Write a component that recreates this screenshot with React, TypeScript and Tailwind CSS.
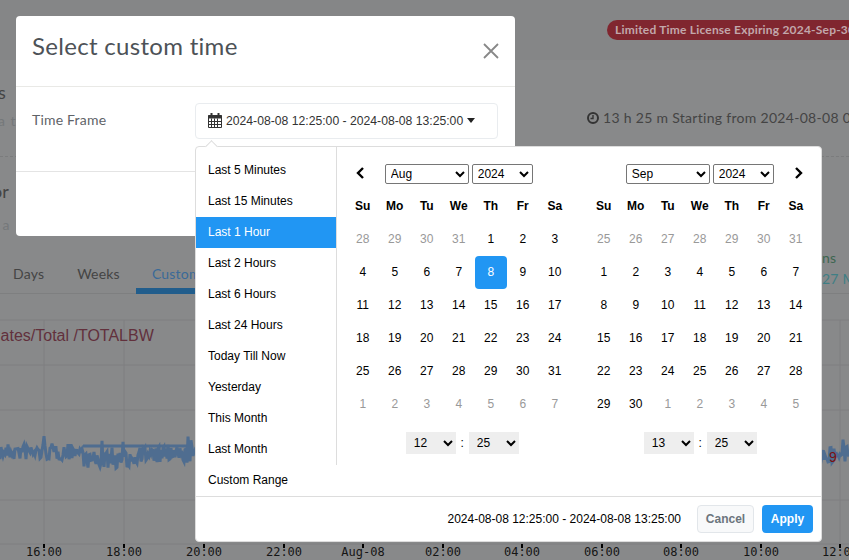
import React from "react"

const RANGES = [
    "Last 5 Minutes",
    "Last 15 Minutes",
    "Last 1 Hour",
    "Last 2 Hours",
    "Last 6 Hours",
    "Last 24 Hours",
    "Today Till Now",
    "Yesterday",
    "This Month",
    "Last Month",
    "Custom Range",
]
const DAY_NAMES = ["Su", "Mo", "Tu", "We", "Th", "Fr", "Sa"]
const MONTHS = ["Jul", "Aug", "Sep", "Oct"]
const YEARS = ["2023", "2024", "2025"]
const pad = (n: number) => String(n).padStart(2, "0")
const HOURS = Array.from({length: 24}, (_, i) => pad(i))
const MINUTES = Array.from({length: 60}, (_, i) => pad(i))

const AUG: [number, boolean][] = [
    ...[28, 29, 30, 31].map((d): [number, boolean] => [d, true]),
    ...Array.from({length: 31}, (_, i): [number, boolean] => [i + 1, false]),
    ...[1, 2, 3, 4, 5, 6, 7].map((d): [number, boolean] => [d, true]),
]
const SEP: [number, boolean][] = [
    ...[25, 26, 27, 28, 29, 30, 31].map((d): [number, boolean] => [d, true]),
    ...Array.from({length: 30}, (_, i): [number, boolean] => [i + 1, false]),
    ...[1, 2, 3, 4, 5].map((d): [number, boolean] => [d, true]),
]

// the bandwidth trace, noisy but repeatable
const wavePoints = () => {
    let seed = 7
    const rand = () => {
        seed = (seed * 16807) % 2147483647
        return seed / 2147483647
    }
    const pts: string[] = []
    for (let x = 0; x <= 849; x += 1) {
        const base = x > 83 && x < 135 ? 166 : x < 83 ? 158 : 161
        const spike = rand() > 0.95 ? -11 : 0
        pts.push(`${x},${(base + (rand() - 0.5) * 17 + spike).toFixed(1)}`)
    }
    return pts.join(" ")
}

const TICKS: [number, string][] = [
    [44, "16:00"], [124, "18:00"], [204, "20:00"], [284, "22:00"], [363, "Aug-08"], [443, "02:00"],
    [522, "04:00"], [602, "06:00"], [681, "08:00"], [761, "10:00"], [840, "12:00"],
]

const Chart = () => (
    <svg width="849" height="265" viewBox="0 0 849 265" className="block">
        {[26, 71, 116, 206, 250].map(y => <line key={y} x1="0" x2="849" y1={y} y2={y} stroke="#7e7f80"/>)}
        {TICKS.map(([x]) => <line key={x} x1={x} x2={x} y1="26" y2="250" stroke="#7e7f80"/>)}
        <line x1="83" x2="190" y1="152" y2="152" stroke="#4f6d90" strokeWidth="3"/>
        <polyline points={wavePoints()} fill="none" stroke="#4f6d90" strokeWidth="3"/>
        {TICKS.map(([x, label]) => (
            <g key={label}>
                <text x={x} y="262" textAnchor="middle" fontSize="12" fill="#151515"
                      fontFamily="'DejaVu Sans Mono', monospace">{label}</text>
                <line x1={x} x2={x} y1="250" y2="254" stroke="#000" strokeWidth="2"/>
            </g>
        ))}
    </svg>
)

const Chevron = ({dir}: {dir: "left" | "right"}) => (
    <svg width="10" height="12" viewBox="0 0 10 12" className="text-black">
        <path d={dir === "left" ? "M8 1 3 6l5 5" : "M2 1l5 5-5 5"} fill="none" stroke="currentColor" strokeWidth="2.4"/>
    </svg>
)

const NavSelect = ({value, options, width}: {value: string; options: string[]; width: string}) => (
    <select defaultValue={value}
            className={`${width} h-5 rounded-[2px] border border-[#767676] bg-white pl-[1px] text-xs text-black appearance-auto`}>
        {options.map(o => <option key={o}>{o}</option>)}
    </select>
)

const TimeSelect = ({value, options}: {value: string; options: string[]}) => (
    <select defaultValue={value} className="h-[22px] w-[50px] bg-[#eeeeee] pl-[4px] text-xs text-black appearance-auto">
        {options.map(o => <option key={o}>{o}</option>)}
    </select>
)

const Calendar = ({days, month, hour, prev, next, selected, minute, timeClass}: {
    days: [number, boolean][]
    month: string
    hour: string
    minute: string
    prev?: boolean
    next?: boolean
    selected?: number
    timeClass: string
}) => (
    <div className="w-56">
        <div className="grid h-[33px] grid-cols-[32px_160px_32px] items-center">
            <div className="flex justify-start pb-[2px] pl-[8px]">{prev && <Chevron dir="left"/>}</div>
            <div className="flex justify-center gap-[3px]">
                <NavSelect value={month} options={MONTHS} width="w-[84px]"/>
                <NavSelect value="2024" options={YEARS} width="w-[61px]"/>
            </div>
            <div className="flex justify-end pb-[2px] pr-[8px]">{next && <Chevron dir="right"/>}</div>
        </div>
        <div className="grid grid-cols-[repeat(7,32px)] auto-rows-[33px] text-xs">
            {DAY_NAMES.map(d => (
                <div key={d} className="flex items-center justify-center pb-[2px] font-bold text-black">{d}</div>
            ))}
            {days.map(([d, off], i) => (
                <div key={i} className={
                    selected === d && !off
                        ? "flex items-center justify-center rounded bg-[#2196f3] pb-[2px] text-white"
                        : off
                            ? "flex items-center justify-center pb-[2px] text-[#999999]"
                            : "flex items-center justify-center pb-[2px] text-black"
                }>{d}</div>
            ))}
        </div>
        <div className={`mt-[11px] flex h-[22px] items-center justify-center text-xs text-black ${timeClass}`}>
            <TimeSelect value={hour} options={HOURS}/>
            <span className="w-[13px] text-center">:</span>
            <TimeSelect value={minute} options={MINUTES}/>
        </div>
    </div>
)

export default function App() {
    return (
        <div className="relative h-[560px] w-[849px] overflow-hidden bg-[#88898a] font-['Lato',sans-serif] text-[#444444]">
            {/* page behind the dialog, already dimmed by the backdrop */}
            <div className="flex h-[60px] items-start overflow-hidden bg-[#858687] pl-[607px] pt-5">
                <span className="h-5 shrink-0 whitespace-nowrap rounded-l-[10px] bg-[#80262f] pl-2 text-xs font-bold leading-5 tracking-[0.2px] text-[#c2a7ab]">
                    Limited Time License Expiring 2024-Sep-30
                </span>
            </div>
            <div className="flex h-[97px] overflow-hidden border-b border-dashed border-[#7b7c7d] pt-5">
                <div className="-ml-[2px] w-[30px] shrink-0">
                    <div className="h-6 text-lg leading-6">s</div>
                    <div className="mt-[7px] text-sm tracking-[1px] text-[#75787a]">a ti</div>
                </div>
                <div className="ml-[559px] mt-[28px] flex h-5 shrink-0 items-center gap-[4px] whitespace-nowrap text-sm tracking-[0.3px]">
                    <svg width="12" height="12" viewBox="0 0 12 12" className="shrink-0">
                        <circle cx="6" cy="6" r="5" fill="none" stroke="#333" strokeWidth="2"/>
                        <path d="M6 3v3.5H3.5" fill="none" stroke="#333" strokeWidth="1.4"/>
                    </svg>
                    13 h 25 m Starting from 2024-08-08 00:00
                </div>
            </div>
            <div className="-ml-[8px] pt-[22px] text-lg leading-6">or</div>
            <div className="-ml-[6px] mt-[12px] text-sm leading-5 text-[#75787a]">t a</div>
            <div className="flex h-[59px] border-b border-[#7e7f80] pt-[29px] text-sm tracking-[0.2px]">
                <span className="ml-[13px]">Days</span>
                <span className="ml-[33px]">Weeks</span>
                <span className="ml-[16px] h-[30px] w-[59px] border-b-[6px] border-[#215d8c] pl-4 whitespace-nowrap text-[#3a6a98]">Custom</span>
                <div className="ml-auto -mt-[16px] mr-[-40px] w-[67px] shrink-0 text-sm leading-5">
                    <div className="text-[#3d6650]">ns</div>
                    <div className="mt-[1px] whitespace-nowrap text-[#3f7f85]">27 M</div>
                </div>
            </div>
            <div className="relative">
                <div className="absolute -left-[11px] top-[30px] font-['Liberation_Sans',sans-serif] text-base whitespace-nowrap text-[#62303c]">
                    Rates/Total /TOTALBW
                </div>
                <div className="absolute left-[829px] top-[153px] font-['Liberation_Sans',sans-serif] text-sm text-[#7a1010]">9</div>
                <Chart/>
            </div>

            {/* dialog */}
            <div className="absolute left-4 top-4 h-[220px] w-[499px] rounded bg-white">
                <div className="relative h-[71px] border-b border-[#e9e9e6] pl-4 pt-[14px]">
                    <div className="text-2xl leading-8 tracking-[0.3px] text-[#4d5257]">Select custom time</div>
                    <svg width="16" height="16" viewBox="0 0 16 16" className="absolute right-4 top-[27px] text-[#888888]">
                        <path d="M1 1l14 14M15 1 1 15" stroke="currentColor" strokeWidth="1.8"/>
                    </svg>
                </div>
                <div className="flex h-[85px] border-b border-[#e4e4e4] px-4 pt-4">
                    <span className="w-[163px] pt-[8px] text-sm leading-[18px] tracking-[0.2px] text-[#5f6368]">Time Frame</span>
                    <div className="flex h-9 w-[303px] items-center gap-1 rounded border border-[#e9ecef] pl-3 font-['Liberation_Sans',sans-serif] text-[12.2px] text-[#333333]">
                        <svg width="14" height="15" viewBox="0 0 14 15" className="-mt-[2px] shrink-0">
                            <path fill="none" stroke="#333" d="M.5 2.5h13v12H.5zM.5 8.5h13M.5 11.5h13M3.5 5.5v9M6.5 5.5v9M9.5 5.5v9"/>
                            <path stroke="#333" strokeWidth="3" d="M0 4h14"/>
                            <path stroke="#333" strokeWidth="2" d="M3.5 0v3.5M10.5 0v3.5"/>
                        </svg>
                        <span>2024-08-08 12:25:00 - 2024-08-08 13:25:00</span>
                        <span className="mb-[1px] h-0 w-0 border-x-[4px] border-t-[5px] border-x-transparent border-t-[#222222]"/>
                    </div>
                </div>
            </div>

            {/* date range picker */}
            <div className="absolute left-[195px] top-[146px] h-[396px] w-[627px] rounded border border-[#dddddd] bg-white font-['Liberation_Sans',sans-serif]">
                <div className="absolute -top-[5px] left-[11px] h-[9px] w-[9px] rotate-45 border-l border-t border-[#dddddd] bg-white"/>
                <div className="relative flex h-[349px] items-start">
                    <ul className="w-[140px] pt-[8px] text-xs text-black">
                        {RANGES.map(r => (
                            <li key={r} className={`flex h-[31px] items-center pb-[2px] pl-3 ${r === "Last 1 Hour" ? "bg-[#2196f3] text-white" : ""}`}>
                                {r}
                            </li>
                        ))}
                    </ul>
                    <div className="flex h-[318px] w-[486px] gap-[17px] border-l border-[#dddddd] pl-[10px] pt-[10px]">
                        <Calendar days={AUG} month="Aug" hour="12" minute="25" prev selected={8} timeClass="pl-[7px]"/>
                        <Calendar days={SEP} month="Sep" hour="13" minute="25" next timeClass="pl-[1px]"/>
                    </div>
                </div>
                <div className="flex h-[45px] items-center justify-end gap-2 border-t border-[#dddddd] pr-2 text-xs">
                    <span className="mr-2 text-black">2024-08-08 12:25:00 - 2024-08-08 13:25:00</span>
                    <button className="h-7 w-[57px] rounded border border-[#e2e6ea] bg-[#f8f9fa] font-bold text-[#6c757d]">Cancel</button>
                    <button className="h-7 w-[51px] rounded bg-[#2196f3] font-bold text-white">Apply</button>
                </div>
            </div>
        </div>
    )
}
